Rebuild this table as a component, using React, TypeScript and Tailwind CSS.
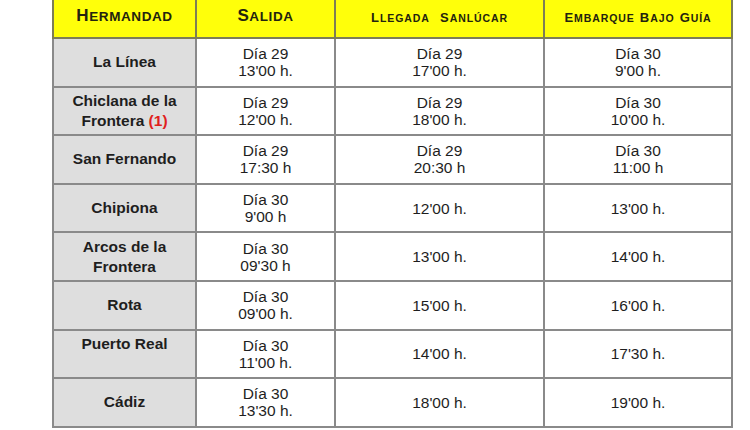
import React from "react";

type Row = {
  name: React.ReactNode;
  salida: string[];
  llegada: string[];
  embarque: string[];
};

const rows: Row[] = [
  { name: "La Línea", salida: ["Día 29", "13'00 h."], llegada: ["Día 29", "17'00 h."], embarque: ["Día 30", "9'00 h."] },
  {
    name: (
      <>
        Chiclana de la
        <br />
        Frontera <span className="text-[#e0211d]">(1)</span>
      </>
    ),
    salida: ["Día 29", "12'00 h."],
    llegada: ["Día 29", "18'00 h."],
    embarque: ["Día 30", "10'00 h."],
  },
  { name: "San Fernando", salida: ["Día 29", "17:30 h"], llegada: ["Día 29", "20:30 h"], embarque: ["Día 30", "11:00 h"] },
  { name: "Chipiona", salida: ["Día 30", "9'00 h"], llegada: ["12'00 h."], embarque: ["13'00 h."] },
  {
    name: (
      <>
        Arcos de la
        <br />
        Frontera
      </>
    ),
    salida: ["Día 30", "09'30 h"],
    llegada: ["13'00 h."],
    embarque: ["14'00 h."],
  },
  { name: "Rota", salida: ["Día 30", "09'00 h."], llegada: ["15'00 h."], embarque: ["16'00 h."] },
  { name: <span className="relative -top-[10px]">Puerto Real</span>, salida: ["Día 30", "11'00 h."], llegada: ["14'00 h."], embarque: ["17'30 h."] },
  { name: "Cádiz", salida: ["Día 30", "13'30 h."], llegada: ["18'00 h."], embarque: ["19'00 h."] },
];

// small caps header: first letter of each word larger
const Caps = ({ words, big }: { words: string[]; big?: boolean }) => (
  <span className={big ? "tracking-[0.6px]" : "tracking-[0.9px]"}>
    {words.map((w, i) => (
      <span key={i}>
        {i > 0 && (w === "" ? "\u00a0" : " ")}
        <span className={big ? "text-[17px]" : "text-[13px]"}>{w.charAt(0)}</span>
        <span className={big ? "text-[13.5px]" : "text-[10.5px]"}>{w.slice(1).toUpperCase()}</span>
      </span>
    ))}
  </span>
);

const Lines = ({ lines }: { lines: string[] }) => (
  <div className="leading-[17px]">
    {lines.map((l) => (
      <div key={l}>{l}</div>
    ))}
  </div>
);

export default function App() {
  return (
    <div
      className="w-[750px] h-[430px] bg-white pl-[52px] text-[#1e1e1e]"
      style={{ fontFamily: '"Liberation Sans", Arial, sans-serif' }}
    >
      <table className="table-fixed border-collapse w-[679px] text-center text-[15.5px]">
        <colgroup>
          <col className="w-[143px]" />
          <col className="w-[139px]" />
          <col className="w-[209px]" />
          <col className="w-[188px]" />
        </colgroup>
        <thead>
          <tr className="h-[38px] bg-[#ffff0a] font-bold text-[#23230f]">
            <th className="border-x-2 border-b-2 border-[#7d7d55] pb-[5px]">
              <Caps big words={["Hermandad"]} />
            </th>
            <th className="border-x-2 border-b-2 border-[#7d7d55] pb-[5px]">
              <Caps big words={["Salida"]} />
            </th>
            <th className="border-x-2 border-b-2 border-[#7d7d55] pb-[4px]">
              <Caps words={["Llegada", "", "Sanlúcar"]} />
            </th>
            <th className="border-x-2 border-b-2 border-[#7d7d55] pb-[4px]">
              <Caps words={["Embarque", "Bajo", "Guía"]} />
            </th>
          </tr>
        </thead>
        <tbody>
          {rows.map((r, i) => (
            <tr key={i} className="h-[48.6px]">
              <td className="border-2 border-[#8a8a8a] bg-[#dedede] font-bold leading-[20px]">
                {r.name}
              </td>
              <td className="border-2 border-[#8a8a8a] bg-white">
                <Lines lines={r.salida} />
              </td>
              <td className="border-2 border-[#8a8a8a] bg-white">
                <Lines lines={r.llegada} />
              </td>
              <td className="border-2 border-[#8a8a8a] bg-white">
                <Lines lines={r.embarque} />
              </td>
            </tr>
          ))}
        </tbody>
      </table>
    </div>
  );
}
